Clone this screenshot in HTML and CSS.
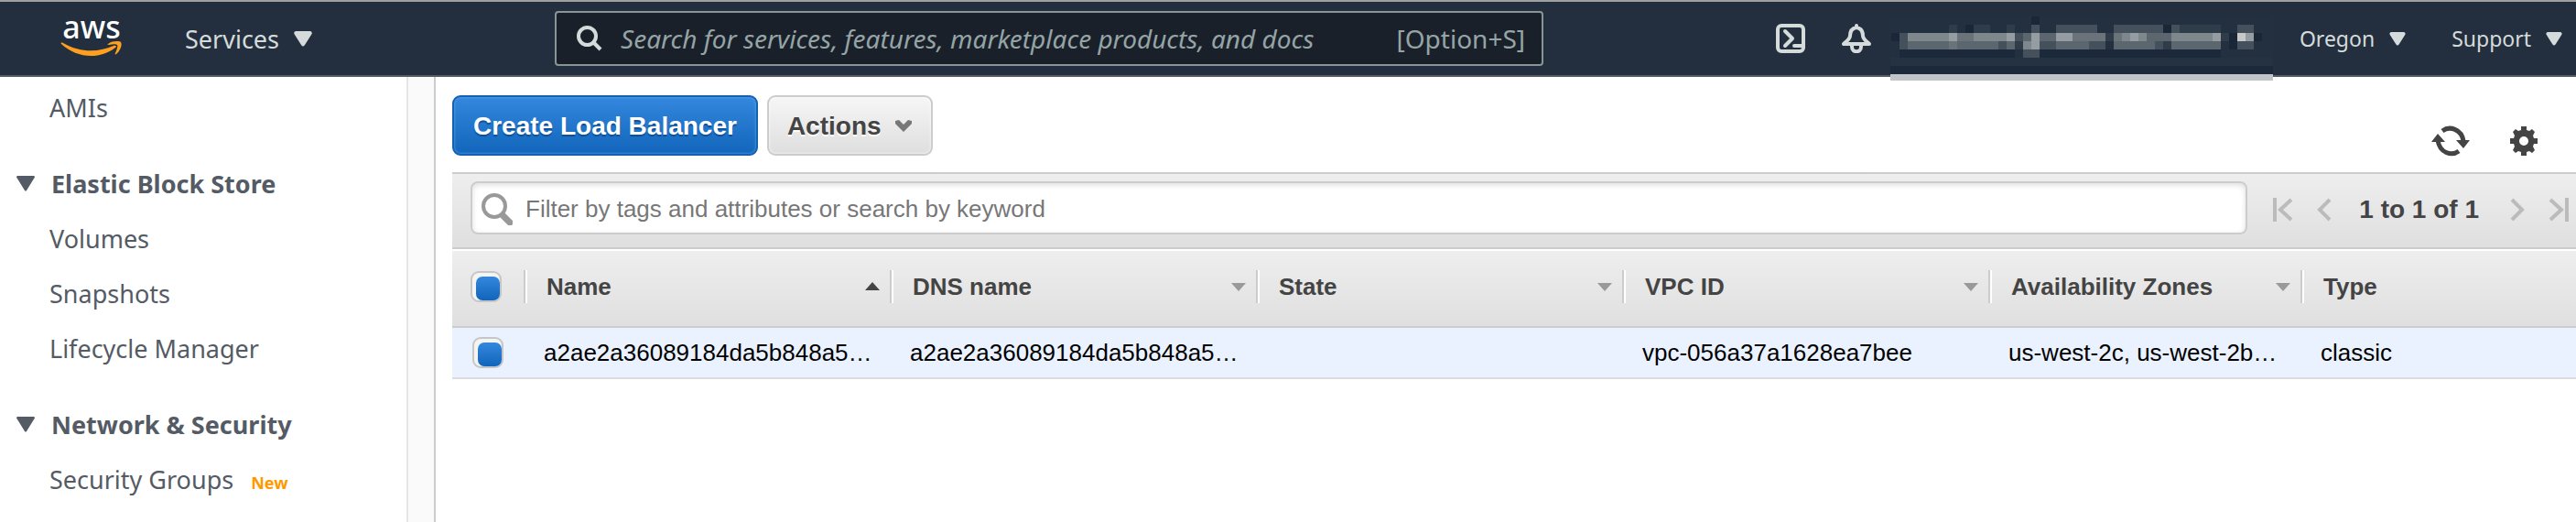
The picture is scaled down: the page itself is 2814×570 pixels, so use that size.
FILE: index.html
```html
<!DOCTYPE html>
<html lang="en">
<head>
<meta charset="utf-8">
<title>Load Balancers | EC2</title>
<link rel="stylesheet" href="styles.css">
</head>
<body>
<header class="topnav">
  <a class="logo" href="#" aria-label="AWS home">
    <svg width="68" height="74" viewBox="0 -14 68 74">
      <text class="logo-text" x="34" y="23" text-anchor="middle">aws</text>
      <path fill="#ff9f1e" d="M1 29C0 28 1 27 3 28C22 39 42 38 58 31C61 30 62 32 60 33C42 47 17 44 1 29Z"/>
      <path fill="#ff9f1e" d="M52 29C57 25 65 26 66 27C68 30 65 37 61 40C60 41 59 40 60 39C62 34 63 31 62 30C61 29 57 29 53 30C51 30 51 29 52 29Z"/>
    </svg>
  </a>
  <button class="nav-btn services" type="button">Services
    <svg width="20" height="17" viewBox="0 0 20 17"><path d="M2 0H18Q21 1 19 4L12 15Q10 18 8 15L1 4Q-1 1 2 0Z"/></svg>
  </button>
  <label class="search">
    <svg width="28" height="28" viewBox="0 0 28 28" fill="none" stroke="#d5dbdb" stroke-width="4"><circle cx="11.500" cy="11.500" r="9.500"/><path d="M18 18L26 26"/></svg>
    <input type="search" aria-label="Search AWS" placeholder="Search for services, features, marketplace products, and docs">
    <span>[Option+S]</span>
  </label>
  <div class="nav-right">
    <button class="nav-icon" type="button" aria-label="CloudShell">
      <svg width="32" height="32" viewBox="0 0 32 32" fill="none" stroke="#d5dbdb" stroke-width="4" stroke-linecap="round" stroke-linejoin="round"><rect x="2" y="2" width="28" height="28" rx="4"/><path d="M10 8L18 16L10 24M20 24H28"/></svg>
    </button>
    <button class="nav-icon" type="button" aria-label="Notifications">
      <svg width="32" height="32" viewBox="0 0 32 32" fill="none" stroke="#d5dbdb" stroke-width="4" stroke-linecap="round" stroke-linejoin="round"><path d="M16 2V4M16 4C11 5 9 9 9 13C9 17 5 19 2 22H30C27 19 23 17 23 13C23 9 21 5 16 4M11 23V25C11 32 21 32 21 25V23"/></svg>
    </button>
    <button class="account" type="button" aria-label="Account">
      <svg width="418" height="70" viewBox="0 0 418 70" shape-rendering="crispEdges">
        <path fill="#223040" d="M0 0H418V63H0Z"/>
        <path fill="#1c293a" d="M10 36H136V45H10ZM163 36H361V45H163ZM0 54H418V63H0Z"/>
        <path fill="#253242" d="M0 45H418V54H0Z"/>
        <path fill="#1a2738" d="M1 18H10V27H1ZM82 9H91V18H82ZM298 9H307V18H298ZM370 27H379V36H370ZM370 18H379V27H370ZM397 18H406V27H397ZM154 0H163V9H154Z"/>
        <path fill="#2f3d4a" d="M64 9H73V18H64ZM91 9H109V18H91ZM127 9H136V18H127ZM316 9H361V18H316ZM136 27H145V36H136ZM235 18H244V27H235ZM361 18H370V27H361ZM298 27H307V36H298Z"/>
        <path fill="#44505b" d="M154 9H163V18H154ZM181 9H226V18H181ZM244 9H298V18H244ZM307 9H316V18H307ZM379 9H397V18H379ZM10 18H19V36H10ZM136 18H145V27H136ZM118 27H127V36H118ZM163 27H181V36H163ZM217 27H235V36H217ZM289 27H298V36H289ZM379 27H397V36H379ZM145 36H163V45H145Z"/>
        <path fill="#5c666e" d="M19 27H118V36H19ZM127 27H136V36H127ZM145 18H154V27H145ZM163 18H181V27H163ZM181 27H217V36H181ZM244 27H289V36H244ZM307 27H361V36H307ZM280 18H307V27H280Z"/>
        <path fill="#6a7379" d="M64 27H73V36H64ZM73 18H91V27H73ZM199 18H235V27H199ZM244 18H253V27H244Z"/>
        <path fill="#7e878c" d="M19 18H64V27H19ZM91 18H127V27H91ZM145 27H154V36H145ZM307 18H352V27H307ZM253 18H280V27H253Z"/>
        <path fill="#969da2" d="M64 18H73V27H64ZM127 18H136V27H127ZM154 18H163V36H154ZM181 18H199V27H181ZM262 18H271V27H262ZM352 18H361V27H352ZM388 18H397V27H388Z"/>
        <path fill="#c5cac9" d="M379 18H388V27H379Z"/>
        <path fill="#c1c4c9" d="M0 63H418V70H0Z"/>
      </svg>
    </button>
    <button class="nav-btn region" type="button">Oregon
      <svg width="18" height="15" viewBox="0 0 20 17"><path d="M2 0H18Q21 1 19 4L12 15Q10 18 8 15L1 4Q-1 1 2 0Z"/></svg>
    </button>
    <button class="nav-btn support" type="button">Support
      <svg width="18" height="15" viewBox="0 0 20 17"><path d="M2 0H18Q21 1 19 4L12 15Q10 18 8 15L1 4Q-1 1 2 0Z"/></svg>
    </button>
  </div>
</header>
<div class="layout">
  <nav class="sidebar" aria-label="EC2">
    <a href="#">AMIs</a>
    <h2><svg width="20" height="17" viewBox="0 0 20 17"><path d="M1 0H19Q21 1 19 3L11 16Q10 17 9 16L1 3Q-1 1 1 0Z"/></svg>Elastic Block Store</h2>
    <a href="#">Volumes</a>
    <a href="#">Snapshots</a>
    <a href="#">Lifecycle Manager</a>
    <h2><svg width="20" height="17" viewBox="0 0 20 17"><path d="M1 0H19Q21 1 19 3L11 16Q10 17 9 16L1 3Q-1 1 1 0Z"/></svg>Network &amp; Security</h2>
    <a href="#">Security Groups <span class="new">New</span></a>
  </nav>
  <div class="gutter"></div>
  <main class="content">
    <div class="actions">
      <button class="btn primary" type="button">Create Load Balancer</button>
      <button class="btn" type="button">Actions
        <svg width="20" height="16" viewBox="0 0 20 16"><path fill="#777" d="M1 2L5 1L10 6L15 1L19 2V5L10 14L1 5Z"/></svg>
      </button>
      <div class="tools">
        <button type="button" aria-label="Refresh">
          <svg width="42" height="34" viewBox="0 0 42 34"><g fill="none" stroke="#444" stroke-width="5"><path d="M12 6C20 0 33 4 35 17"/><path d="M30 28C22 34 9 30 7 16"/></g><path fill="#444" d="M27 16H42L35 25ZM0 18H15L7 9Z"/></svg>
        </button>
        <button type="button" aria-label="Settings">
          <svg width="30" height="32" viewBox="0 0 30 32"><path fill="#444" fill-rule="evenodd" d="M12 0H18V4L21 5L24 3L27 6L25 10L26 13H30V19H26L25 22L27 26L24 29L21 27L18 28V32H12V28L9 27L6 29L3 26L5 22L4 19H0V13H4L5 10L3 6L6 3L9 5L12 4ZM15 11A5 5 0 1 0 15 21A5 5 0 1 0 15 11Z"/></svg>
        </button>
      </div>
    </div>
    <div class="toolbar">
      <label class="filter">
        <svg width="34" height="36" viewBox="0 0 34 36" fill="none" stroke="#999"><circle cx="14" cy="15" r="12" stroke-width="4"/><path d="M24 26L31 33" stroke-width="7" stroke-linecap="round"/></svg>
        <input type="text" aria-label="Filter" placeholder="Filter by tags and attributes or search by keyword">
      </label>
      <div class="pager">
        <button type="button" aria-label="First page"><svg width="22" height="26" viewBox="0 0 22 26"><path d="M2 0V26M20 2L8 13L20 24"/></svg></button>
        <button type="button" aria-label="Previous page"><svg width="16" height="26" viewBox="0 0 16 26"><path d="M14 2L3 13L14 24"/></svg></button>
        <span>1 to 1 of 1</span>
        <button type="button" aria-label="Next page"><svg width="16" height="26" viewBox="0 0 16 26"><path d="M2 2L13 13L2 24"/></svg></button>
        <button type="button" aria-label="Last page"><svg width="22" height="26" viewBox="0 0 22 26"><path d="M20 0V26M2 2L14 13L2 24"/></svg></button>
      </div>
    </div>
    <table class="grid">
      <colgroup><col class="c-check"><col class="c-wide"><col class="c-wide"><col class="c-wide"><col class="c-wide"><col class="c-zone"><col></colgroup>
      <thead>
        <tr>
          <th scope="col"><input type="checkbox" checked aria-label="Select all"></th>
          <th scope="col"><div>Name<svg width="16" height="10" viewBox="0 0 16 10"><path fill="#444" d="M0 9L8 0L16 9Z"/></svg></div></th>
          <th scope="col"><div>DNS name<svg width="16" height="10" viewBox="0 0 16 10"><path fill="#999" d="M0 1H16L8 10Z"/></svg></div></th>
          <th scope="col"><div>State<svg width="16" height="10" viewBox="0 0 16 10"><path fill="#999" d="M0 1H16L8 10Z"/></svg></div></th>
          <th scope="col"><div>VPC ID<svg width="16" height="10" viewBox="0 0 16 10"><path fill="#999" d="M0 1H16L8 10Z"/></svg></div></th>
          <th scope="col"><div>Availability Zones<svg width="16" height="10" viewBox="0 0 16 10"><path fill="#999" d="M0 1H16L8 10Z"/></svg></div></th>
          <th scope="col"><div>Type</div></th>
        </tr>
      </thead>
      <tbody>
        <tr>
          <td><input type="checkbox" checked aria-label="Select load balancer"></td>
          <td>a2ae2a36089184da5b848a5…</td>
          <td>a2ae2a36089184da5b848a5…</td>
          <td></td>
          <td>vpc-056a37a1628ea7bee</td>
          <td>us-west-2c, us-west-2b…</td>
          <td>classic</td>
        </tr>
      </tbody>
    </table>
  </main>
</div>
</body>
</html>
```

FILE: styles.css
```css
* { box-sizing: border-box; }

body {
  margin: 0;
  min-height: 100vh;
  display: flex;
  flex-direction: column;
  background: #fff;
  font-family: "Liberation Sans", Arial, sans-serif;
  font-size: 26px;
}

button {
  margin: 0;
  padding: 0;
  border: 0;
  background: none;
  font: inherit;
  color: inherit;
}

svg { display: block; flex: none; }

/* Top navigation */
.topnav {
  display: flex;
  align-items: center;
  height: 84px;
  padding: 0 15px 0 66px;
  border-top: 2px solid #a0a0a0;
  border-bottom: 2px solid #545b64;
  background: #232f3e;
  color: #d5dbdb;
  font-family: "Noto Sans", sans-serif;
}

.logo-text {
  fill: #fff;
  font-family: "Noto Sans", sans-serif;
  font-size: 34px;
  font-weight: 500;
}

.nav-btn {
  display: flex;
  align-items: center;
  gap: 16px;
  white-space: nowrap;
  fill: #d5dbdb;
}

.services { margin-left: 68px; font-size: 27px; }
.region, .support { font-size: 23px; }
.support { margin-left: 50px; }

.search {
  display: flex;
  align-items: center;
  flex: 0 0 1080px;
  height: 60px;
  margin-left: 265px;
  padding: 0 18px 0 22px;
  border: 2px solid #879596;
  border-radius: 4px;
  background: #1a202a;
  color: #95a5a6;
  font-size: 28px;
}

.search input {
  flex: 1;
  min-width: 0;
  margin: 0 0 0 20px;
  padding: 0;
  border: 0;
  outline: 0;
  background: none;
  color: #d5dbdb;
  font: italic 28px "Noto Sans", sans-serif;
}

.search input::placeholder { color: #95a5a6; opacity: 1; }

.nav-right {
  display: flex;
  align-items: center;
  margin-left: auto;
}

.nav-icon { margin-right: 40px; }

.nav-icon + .account { margin-left: -19px; }

.account {
  position: relative;
  width: 418px;
  height: 48px;
  margin-right: 29px;
}

.account svg { position: absolute; top: 0; left: 0; }

/* Page layout */
.layout { display: flex; flex: 1; }

.sidebar {
  flex: 0 0 446px;
  padding: 4px 0 0 54px;
  border-right: 2px solid #e5e5e5;
  color: #545b64;
  font: 27px/60px "Noto Sans", sans-serif;
}

.sidebar a {
  display: block;
  color: inherit;
  text-decoration: none;
}

.sidebar h2 {
  display: flex;
  align-items: center;
  gap: 18px;
  margin: 22px 0 0 -36px;
  font-size: 27px;
  line-height: 61px;
  fill: #545b64;
}

.new {
  margin-left: 12px;
  color: #ff9900;
  font-size: 18px;
  font-weight: 700;
}

.gutter {
  flex: 0 0 30px;
  border-right: 2px solid #ccc;
  background: #fafafa;
}

.content {
  flex: 1;
  min-width: 0;
  padding: 20px 0 0 18px;
}

/* Action buttons */
.actions {
  display: flex;
  align-items: flex-start;
  gap: 10px;
  height: 84px;
}

.btn {
  display: flex;
  align-items: center;
  gap: 14px;
  height: 66px;
  padding: 2px 20px 0;
  border: 2px solid #ccc;
  border-radius: 9px;
  background: linear-gradient(#f6f6f6, #dedede);
  box-shadow: inset 0 0 3px #fff;
  color: #444;
  font-size: 28px;
  font-weight: 700;
  text-shadow: 0 2px 0 #fff;
  white-space: nowrap;
}

.primary {
  padding: 2px 21px 0;
  border-color: #1361b5;
  background: linear-gradient(#3388dd, #1166bb);
  box-shadow: inset 0 0 3px #6aa9ea;
  color: #fff;
  text-shadow: 0 2px 1px #0f4f96;
}

.tools {
  display: flex;
  align-items: center;
  gap: 44px;
  margin: 33px 42px 0 auto;
}

/* Filter bar */
.toolbar {
  display: flex;
  align-items: center;
  gap: 28px;
  height: 84px;
  padding: 0 8px 6px 20px;
  border-top: 2px solid #ccc;
  border-bottom: 2px solid #ccc;
  background: linear-gradient(#eee, #dfdfdf);
}

.filter {
  display: flex;
  align-items: center;
  flex: 1;
  height: 58px;
  padding: 2px 12px 0 10px;
  border: 2px solid #ccc;
  border-radius: 8px;
  background: #fff;
  box-shadow: inset 0 2px 6px #ddd;
}

.filter input {
  flex: 1;
  min-width: 0;
  margin: 0 0 0 14px;
  padding: 0;
  border: 0;
  outline: 0;
  background: none;
  font: 26px "Liberation Sans", Arial, sans-serif;
}

.filter input::placeholder { color: #777; opacity: 1; }

.pager {
  display: flex;
  align-items: center;
  gap: 26px;
  padding-top: 4px;
  color: #444;
  font-size: 28px;
  font-weight: 700;
  white-space: nowrap;
}

.pager span { padding: 0 8px 0 4px; }

.pager path { fill: none; stroke: #bbb; stroke-width: 4; }

/* Load balancer table */
.grid {
  width: 100%;
  margin-top: 2px;
  table-layout: fixed;
  border-collapse: separate;
  border-spacing: 0;
}

.c-check { width: 78px; }
.c-wide { width: 400px; }
.c-zone { width: 341px; }

.grid th {
  height: 84px;
  padding: 0 0 4px;
  border-bottom: 2px solid #ccc;
  color: #444;
  text-align: left;
}

.grid thead { background: linear-gradient(#eee, #dfdfdf); }

.grid th:first-child { padding-left: 20px; }

.grid th div {
  display: flex;
  align-items: center;
  justify-content: space-between;
  height: 36px;
  padding: 0 11px 0 23px;
  border-left: 2px solid #ccc;
  box-shadow: inset 2px 0 0 #fff;
  white-space: nowrap;
}

.grid td {
  height: 56px;
  padding: 0 0 0 22px;
  border-bottom: 2px solid #d9dde3;
  background: #eaf2ff;
  color: #000;
  overflow: hidden;
  white-space: nowrap;
}

.grid input {
  appearance: none;
  display: block;
  position: relative;
  width: 34px;
  height: 34px;
  margin: 0;
  border: 2px solid #c6c6c6;
  border-radius: 9px;
  background: #f4f4f4;
}

.grid input:checked::after {
  content: "";
  position: absolute;
  inset: 4px 0 0 4px;
  border-radius: 7px;
  background: linear-gradient(#3388dd, #1166bb);
}
```
